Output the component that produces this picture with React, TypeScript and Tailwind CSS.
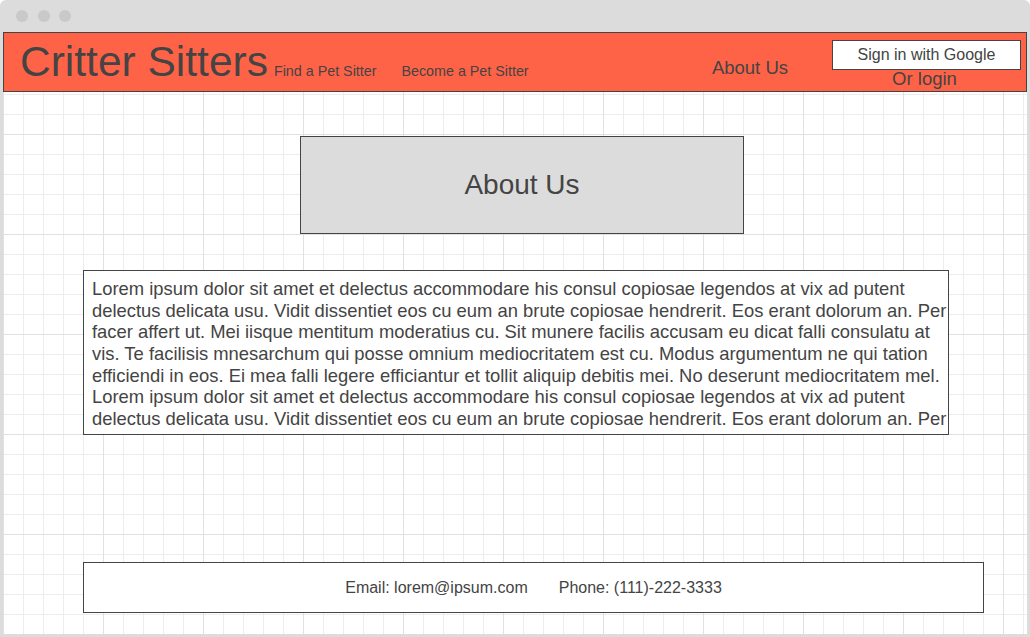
const lorem =
  "Lorem ipsum dolor sit amet et delectus accommodare his consul copiosae legendos at vix ad putent delectus delicata usu. Vidit dissentiet eos cu eum an brute copiosae hendrerit. Eos erant dolorum an. Per facer affert ut. Mei iisque mentitum moderatius cu. Sit munere facilis accusam eu dicat falli consulatu at vis. Te facilisis mnesarchum qui posse omnium mediocritatem est cu. Modus argumentum ne qui tation efficiendi in eos. Ei mea falli legere efficiantur et tollit aliquip debitis mei. No deserunt mediocritatem mel. Lorem ipsum dolor sit amet et delectus accommodare his consul copiosae legendos at vix ad putent delectus delicata usu. Vidit dissentiet eos cu eum an brute copiosae hendrerit. Eos erant dolorum an. Per";

function Header() {
  return (
    <header className="flex h-[60px] shrink-0 items-start border border-[#444] bg-[#ff6347] text-[#444]">
      {/* brand + main links share a baseline */}
      <div className="ml-4 mt-2 flex items-baseline">
        <h1 className="text-[42.5px] leading-none">Critter Sitters</h1>
        <a className="ml-1.5 text-[14.3px] leading-none">Find a Pet Sitter</a>
        <a className="ml-[25px] text-[14.3px] leading-none">Become a Pet Sitter</a>
      </div>
      <a className="ml-auto mr-[44px] mt-[26px] text-[18.5px] leading-none">About Us</a>
      <div className="mr-[5px] mt-[7px] flex w-[189px] flex-col items-center">
        <button
          type="button"
          className="h-[30px] w-full border border-[#444] bg-white text-base leading-none text-[#444]"
        >
          Sign in with Google
        </button>
        <a className="mr-1 text-[18.5px] leading-none">Or login</a>
      </div>
    </header>
  );
}

export default function App() {
  return (
    <div className="flex h-[637px] w-[1030px] flex-col overflow-hidden rounded-t-[6px] bg-[#dcdcdc] px-[3px] pb-[3px] font-['Liberation_Sans',Arial,sans-serif] text-[#444]">
      {/* window chrome */}
      <div className="flex h-8 shrink-0 items-center gap-[9.5px] pl-[13px]">
        <span className="h-3 w-3 rounded-full bg-[#c9c9c9]" />
        <span className="h-3 w-3 rounded-full bg-[#c9c9c9]" />
        <span className="h-3 w-3 rounded-full bg-[#c9c9c9]" />
      </div>

      <main className="flex flex-1 flex-col bg-white bg-[linear-gradient(to_right,#e1e1e1_1px,transparent_1px),linear-gradient(to_bottom,#e1e1e1_1px,transparent_1px),linear-gradient(to_right,#ededed_1px,transparent_1px),linear-gradient(to_bottom,#ededed_1px,transparent_1px)] bg-[size:100px_100px,100px_100px,20px_20px,20px_20px] bg-[position:0_2px]">
        <Header />

        <div className="ml-[297px] mt-[44px] flex h-[98px] w-[444px] items-center justify-center border border-[#444] bg-[#dcdcdc]">
          <h2 className="text-[28px] leading-none">About Us</h2>
        </div>

        <div className="ml-20 mt-9 h-[165px] w-[866px] overflow-hidden border border-[#444] bg-white pl-2 pt-[7px]">
          <p className="text-[18.4px] leading-[21.67px]">{lorem}</p>
        </div>

        <footer className="mb-[21px] ml-20 mt-auto flex h-[51px] w-[901px] items-center justify-center gap-[31px] border border-[#444] bg-white text-base leading-none">
          <span>Email: lorem@ipsum.com</span>
          <span>Phone: (111)-222-3333</span>
        </footer>
      </main>
    </div>
  );
}
